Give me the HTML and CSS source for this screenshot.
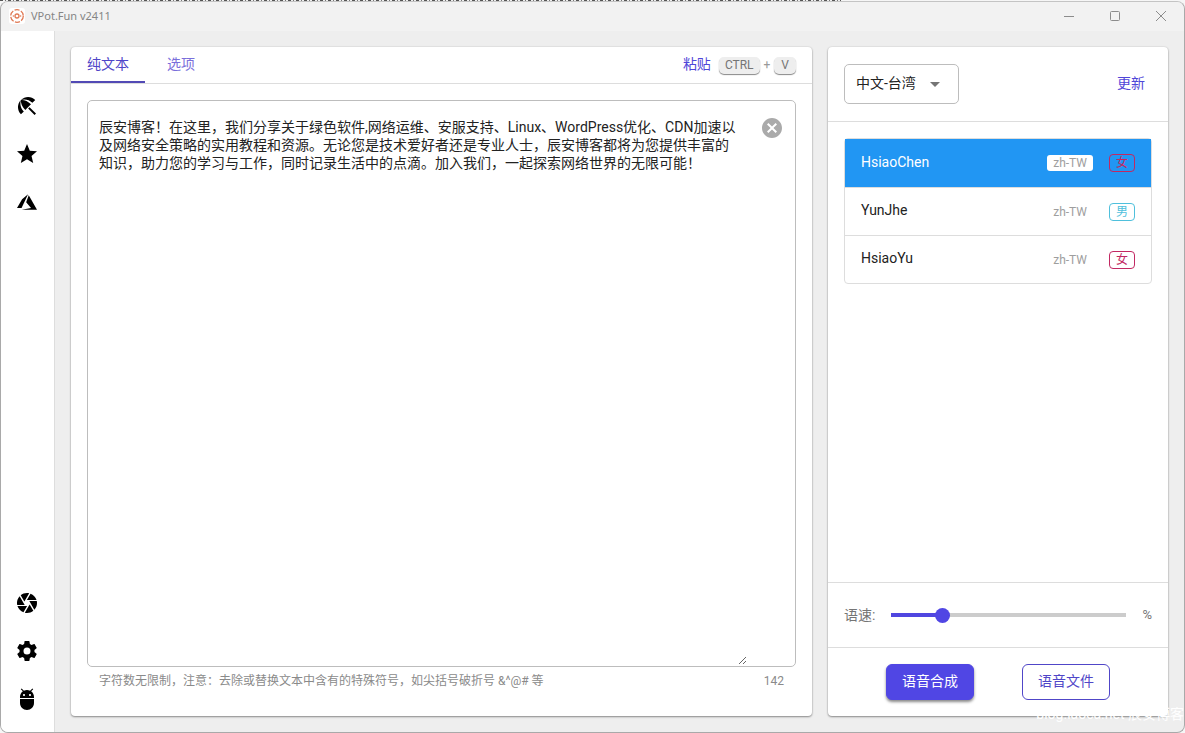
FILE: index.html
```html
<!DOCTYPE html>
<html lang="zh-CN">
<head>
<meta charset="utf-8">
<title>VPot.Fun v2411</title>
<link rel="stylesheet" href="styles.css">
</head>
<body>
<div class="window">
  <header class="titlebar">
    <svg class="logo" viewBox="0 0 16 16"><rect width="16" height="16" rx="3" fill="#fff"/><g fill="none" stroke="#e07a55"><circle cx="8" cy="8" r="6.3" stroke-width="1.3" stroke-dasharray="5.2 1.4"/><circle cx="8" cy="8" r="2" stroke-width="1.3"/><path d="M4.300 7v2M11.700 7v2" stroke-width=".8"/></g></svg>
    <span class="title">VPot.Fun v2411</span>
    <button class="winbtn" aria-label="最小化"><svg viewBox="0 0 12 12"><path d="M1 6.500h10"/></svg></button>
    <button class="winbtn" aria-label="最大化"><svg viewBox="0 0 12 12"><rect x="1.500" y="1.500" width="9" height="9" rx="1"/></svg></button>
    <button class="winbtn" aria-label="关闭"><svg viewBox="0 0 12 12"><path d="M1 1l10 10M11 1L1 11"/></svg></button>
  </header>
  <div class="body">
    <nav class="sidebar">
      <button class="navbtn" aria-label="沙滩"><svg viewBox="0 0 24 24"><path d="M13.127 14.56l1.43-1.43 6.44 6.443L19.57 21zm4.293-5.73l2.86-2.86c-3.95-3.95-10.35-3.96-14.3-.02 3.93-1.3 8.31-.25 11.44 2.88zM5.95 5.98c-3.94 3.95-3.93 10.35.02 14.3l2.86-2.86C5.7 14.29 4.65 9.91 5.95 5.98zm.02-.02l-.01.01c-.38 3.01 1.17 6.88 4.3 10.02l5.73-5.73c-3.13-3.13-7.01-4.68-10.02-4.3z"/></svg></button>
      <button class="navbtn" aria-label="收藏"><svg viewBox="0 0 24 24"><path d="M12 17.27L18.18 21l-1.64-7.03L22 9.24l-7.19-.61L12 2 9.19 8.63 2 9.24l5.46 4.73L5.82 21z"/></svg></button>
      <button class="navbtn" aria-label="Azure"><svg viewBox="0 0 24 24"><path d="M13.05 4.24L6.56 18.05 2 18l5.09-8.76 5.96-5zm.7 1.09L22 19.76H6.74l9.3-1.66-4.87-5.79 2.58-6.98z"/></svg></button>
      <span class="spacer"></span>
      <button class="navbtn" aria-label="光圈"><svg viewBox="0 0 24 24"><path d="M9.4 10.5l4.77-8.26C13.47 2.09 12.75 2 12 2c-2.4 0-4.6.85-6.32 2.25l3.66 6.35.06-.1zM21.54 9c-.92-2.92-3.15-5.26-6-6.34L11.88 9h9.66zm.26 1h-7.49l.29.5 4.76 8.25C21 16.97 22 14.61 22 12c0-.69-.07-1.35-.2-2zM8.54 12l-3.9-6.75C3.01 7.03 2 9.39 2 12c0 .69.07 1.35.2 2h7.49l-1.15-2zm-6.08 3c.92 2.92 3.15 5.26 6 6.34L12.12 15H2.46zm11.27 0l-3.9 6.76c.7.15 1.42.24 2.17.24 2.4 0 4.6-.85 6.32-2.25l-3.66-6.35-.93 1.6z"/></svg></button>
      <button class="navbtn" aria-label="设置"><svg viewBox="0 0 24 24"><path d="M19.5 12c0-.34-.03-.66-.07-.98l2.11-1.65c.19-.15.24-.42.12-.64l-2-3.46c-.12-.22-.39-.3-.61-.22l-2.49 1c-.52-.4-1.08-.73-1.69-.98l-.38-2.65A.49.49 0 0014 2h-4c-.25 0-.46.18-.49.42l-.38 2.65c-.61.25-1.17.59-1.69.98l-2.49-1c-.23-.09-.49 0-.61.22l-2 3.46c-.13.22-.07.49.12.64l2.11 1.65c-.04.32-.07.65-.07.98s.03.66.07.98l-2.11 1.65c-.19.15-.24.42-.12.64l2 3.46c.12.22.39.3.61.22l2.49-1c.52.4 1.08.73 1.69.98l.38 2.65c.03.24.24.42.49.42h4c.25 0 .46-.18.49-.42l.38-2.65c.61-.25 1.17-.59 1.69-.98l2.49 1c.23.09.49 0 .61-.22l2-3.46c.12-.22.07-.49-.12-.64l-2.11-1.65c.04-.32.07-.64.07-.98zM12 15.5a3.5 3.5 0 110-7 3.5 3.5 0 010 7z"/></svg></button>
      <button class="navbtn" aria-label="调试"><svg viewBox="0 0 24 24"><path d="M5 16c0 3.87 3.13 7 7 7s7-3.130 7-7v-4H5v4zM16.12 4.370l2.100-2.100-.82-.83-2.300 2.310C14.160 3.280 13.120 3 12 3s-2.160.28-3.090.75L6.600 1.440l-.82.83 2.100 2.100C6.140 5.640 5 7.680 5 10v1h14v-1c0-2.320-1.140-4.360-2.880-5.630zM9 9c-.55 0-1-.45-1-1s.45-1 1-1 1 .45 1 1-.45 1-1 1zm6 0c-.55 0-1-.45-1-1s.45-1 1-1 1 .45 1 1-.45 1-1 1z"/></svg></button>
    </nav>
    <main class="content">
      <section class="card editor">
        <div class="tabs">
          <button class="tab active">纯文本</button>
          <button class="tab">选项</button>
          <span class="spacer"></span>
          <button class="link">粘贴</button>
          <kbd class="key">CTRL</kbd><span class="plus">+</span><kbd class="key">V</kbd>
        </div>
        <div class="editor-body">
          <div class="field">
            <textarea class="text" id="text" aria-label="文本" aria-describedby="hint" spellcheck="false">辰安博客！在这里，我们分享关于绿色软件,网络运维、安服支持、Linux、WordPress优化、CDN加速以及网络安全策略的实用教程和资源。无论您是技术爱好者还是专业人士，辰安博客都将为您提供丰富的知识，助力您的学习与工作，同时记录生活中的点滴。加入我们，一起探索网络世界的无限可能！</textarea>
            <button class="clear" aria-label="清除"><svg viewBox="0 0 24 24"><path d="M12 2C6.470 2 2 6.470 2 12s4.470 10 10 10 10-4.470 10-10S17.530 2 12 2zm5 13.590L15.590 17 12 13.410 8.410 17 7 15.590 10.590 12 7 8.410 8.410 7 12 10.590 15.590 7 17 8.410 13.410 12 17 15.590z"/></svg></button>
          </div>
          <div class="helper"><span id="hint">字符数无限制，注意：去除或替换文本中含有的特殊符号，如尖括号破折号 &amp;^@# 等</span><span>142</span></div>
        </div>
      </section>
      <section class="card voices">
        <div class="voice-head">
          <div class="select-wrap">
            <select class="select" aria-label="语言"><option>中文-台湾</option></select>
            <svg class="arrow" viewBox="0 0 10 5"><path d="M0 0h10L5 5z"/></svg>
          </div>
          <button class="link">更新</button>
        </div>
        <div class="voice-area">
          <ul class="list">
            <li><button class="row selected"><span class="name">HsiaoChen</span><span class="locale">zh-TW</span><span class="sex female">女</span></button></li>
            <li><button class="row"><span class="name">YunJhe</span><span class="locale">zh-TW</span><span class="sex male">男</span></button></li>
            <li><button class="row"><span class="name">HsiaoYu</span><span class="locale">zh-TW</span><span class="sex female">女</span></button></li>
          </ul>
        </div>
        <div class="speed">
          <label for="rate">语速:</label>
          <input class="rate" id="rate" type="range" min="0" max="100" value="20">
          <span>%</span>
        </div>
        <div class="actions">
          <button class="btn primary">语音合成</button>
          <button class="btn outline">语音文件</button>
        </div>
      </section>
    </main>
  </div>
  <div class="watermark">blog.iaoca.net 辰安博客</div>
</div>
</body>
</html>
```
FILE: styles.css
```css
* { box-sizing: border-box; }
html, body { height: 100%; }
body {
  margin: 0;
  padding-top: 1px;
  background: repeating-linear-gradient(to right, #555 0 3px, #eee 3px 5px, #777 5px 6px, #eee 6px 8px) top left / 71% 1px no-repeat #f6f6f6;
  font: 14px/18px Roboto, "Noto Sans CJK SC", sans-serif;
  color: #222;
}
button {
  margin: 0;
  padding: 0;
  border: 0;
  background: none;
  font: inherit;
  color: inherit;
}
.window {
  position: relative;
  display: flex;
  flex-direction: column;
  height: 100%;
  overflow: hidden;
  border: 1px solid #a9a9a9;
  border-top-color: #c4c4c4;
  border-radius: 8px;
  background: #eee;
}
.titlebar {
  display: flex;
  align-items: center;
  height: 29px;
  padding: 0 0 2px 8px;
  background: #f2f2f2;
}
.logo { width: 16px; height: 16px; }
.title {
  flex: 1;
  margin-left: 6px;
  font-family: "Noto Sans", sans-serif;
  font-size: 11px;
  color: #858585;
}
.winbtn {
  display: flex;
  align-items: center;
  justify-content: center;
  width: 46px;
  height: 26px;
}
.winbtn svg { width: 12px; height: 12px; fill: none; stroke: #8c8c8c; }
.body { display: flex; flex: 1; min-height: 0; }
.sidebar {
  display: flex;
  flex-direction: column;
  align-items: center;
  gap: 8px;
  width: 54px;
  padding: 55px 1px 13px 0;
  border-right: 1px solid #ddd;
  background: #fff;
}
.navbtn {
  display: flex;
  align-items: center;
  justify-content: center;
  width: 40px;
  height: 40px;
}
.navbtn svg { width: 24px; height: 24px; fill: #000; }
.spacer { flex: 1; }
.content {
  display: flex;
  flex: 1;
  gap: 16px;
  min-width: 0;
  padding: 16px;
}
.card {
  display: flex;
  flex-direction: column;
  overflow: hidden;
  border-radius: 4px;
  background: #fff;
  box-shadow: 0 1px 2px #0006, 0 0 2px #0002;
}
.editor { flex: 1; min-width: 0; }
.voices { width: 340px; }
.tabs {
  display: flex;
  align-items: center;
  height: 37px;
  padding-right: 16px;
  border-bottom: 1px solid #ddd;
}
.tab {
  height: 36px;
  padding: 0 16px;
  border-bottom: 2px solid transparent;
  color: #7a6fdb;
}
.tab.active { border-color: #524ab5; color: #4f46c8; }
.tab + .tab { margin-left: 6px; }
.link { padding-bottom: 2px; color: #4f46d8; }
.key {
  margin-left: 8px;
  padding: 0 6px;
  border-radius: 5px;
  background: #eee;
  box-shadow: 0 1px 1px #0007;
  font: 12px/17px Roboto, sans-serif;
  color: #757575;
}
.plus { margin-left: 4px; color: #999; font-size: 12px; }
.plus + .key { margin-left: 4px; padding: 0 7px; }
.editor-body {
  display: flex;
  flex: 1;
  flex-direction: column;
  padding: 16px 16px 26px;
}
.field {
  display: flex;
  flex: 1;
  align-items: flex-start;
  border: 1px solid #bdbdbd;
  border-radius: 5px;
}
.text {
  flex: 1;
  align-self: stretch;
  margin: 17px 13px 1px 11px;
  padding: 0 8px 0 0;
  border: 0;
  outline: 0;
  background: none;
  font: inherit;
  color: #222;
  resize: both;
}
.clear { height: 24px; margin: 15px 11px 0 0; }
.clear svg { display: block; width: 24px; height: 24px; fill: #aaa; }
.helper {
  display: flex;
  justify-content: space-between;
  padding: 5px 12px 0;
  font-size: 12px;
  color: #8a8a8a;
}
.voice-head {
  display: flex;
  align-items: center;
  justify-content: space-between;
  height: 75px;
  padding: 0 23px 0 16px;
  border-bottom: 1px solid #ddd;
}
.select-wrap { position: relative; }
.select {
  appearance: none;
  width: 115px;
  height: 40px;
  padding: 0 11px 2px;
  border: 1px solid #bdbdbd;
  border-radius: 5px;
  background: #fff;
  font: inherit;
  color: #222;
}
.arrow {
  position: absolute;
  right: 19px;
  top: 18px;
  width: 10px;
  height: 5px;
  fill: #757575;
}
.voice-area { flex: 1; padding: 16px; }
.list {
  margin: 0;
  padding: 0;
  border: 1px solid #ddd;
  border-radius: 4px;
  list-style: none;
}
.list li + li { border-top: 1px solid #ddd; }
.row {
  display: flex;
  align-items: center;
  width: 100%;
  height: 48px;
  padding: 0 16px;
}
.list li + li .row { height: 47px; }
.row.selected { background: #2196f3; color: #fff; }
.name { flex: 1; padding-bottom: 3px; text-align: left; }
.locale {
  padding: 0 6px;
  border-radius: 3px;
  background: #fff;
  font-size: 12px;
  line-height: 16px;
  color: #9e9e9e;
}
.sex {
  margin-left: 16px;
  padding: 0 6px;
  border: 1px solid;
  border-radius: 4px;
  font-size: 12px;
  line-height: 16px;
}
.female { color: #c22862; }
.male { color: #4fc0dc; }
.speed {
  display: flex;
  align-items: center;
  gap: 16px;
  height: 65px;
  padding: 0 16px;
  border-top: 1px solid #ddd;
  color: #757575;
}
.speed span { font-size: 13px; }
.rate {
  flex: 1;
  appearance: none;
  min-width: 0;
  height: 16px;
  margin: 0;
  background: linear-gradient(to right, #5046e0 22%, #ccc 22%) center / 100% 4px no-repeat;
}
.rate::-webkit-slider-thumb {
  appearance: none;
  width: 15px;
  height: 15px;
  border-radius: 50%;
  background: #5046e4;
}
.actions {
  display: flex;
  align-items: center;
  justify-content: center;
  gap: 48px;
  height: 69px;
  border-top: 1px solid #ddd;
}
.btn { height: 36px; padding: 0 15px 2px; border: 1px solid #5046c8; border-radius: 6px; }
.primary { border-color: #5046e4; background: #5046e4; box-shadow: 0 2px 3px #0007; color: #fff; }
.outline { color: #5046c8; }
.watermark {
  position: absolute;
  right: 0;
  bottom: 9px;
  font-size: 14px;
  color: #fff;
}
```
